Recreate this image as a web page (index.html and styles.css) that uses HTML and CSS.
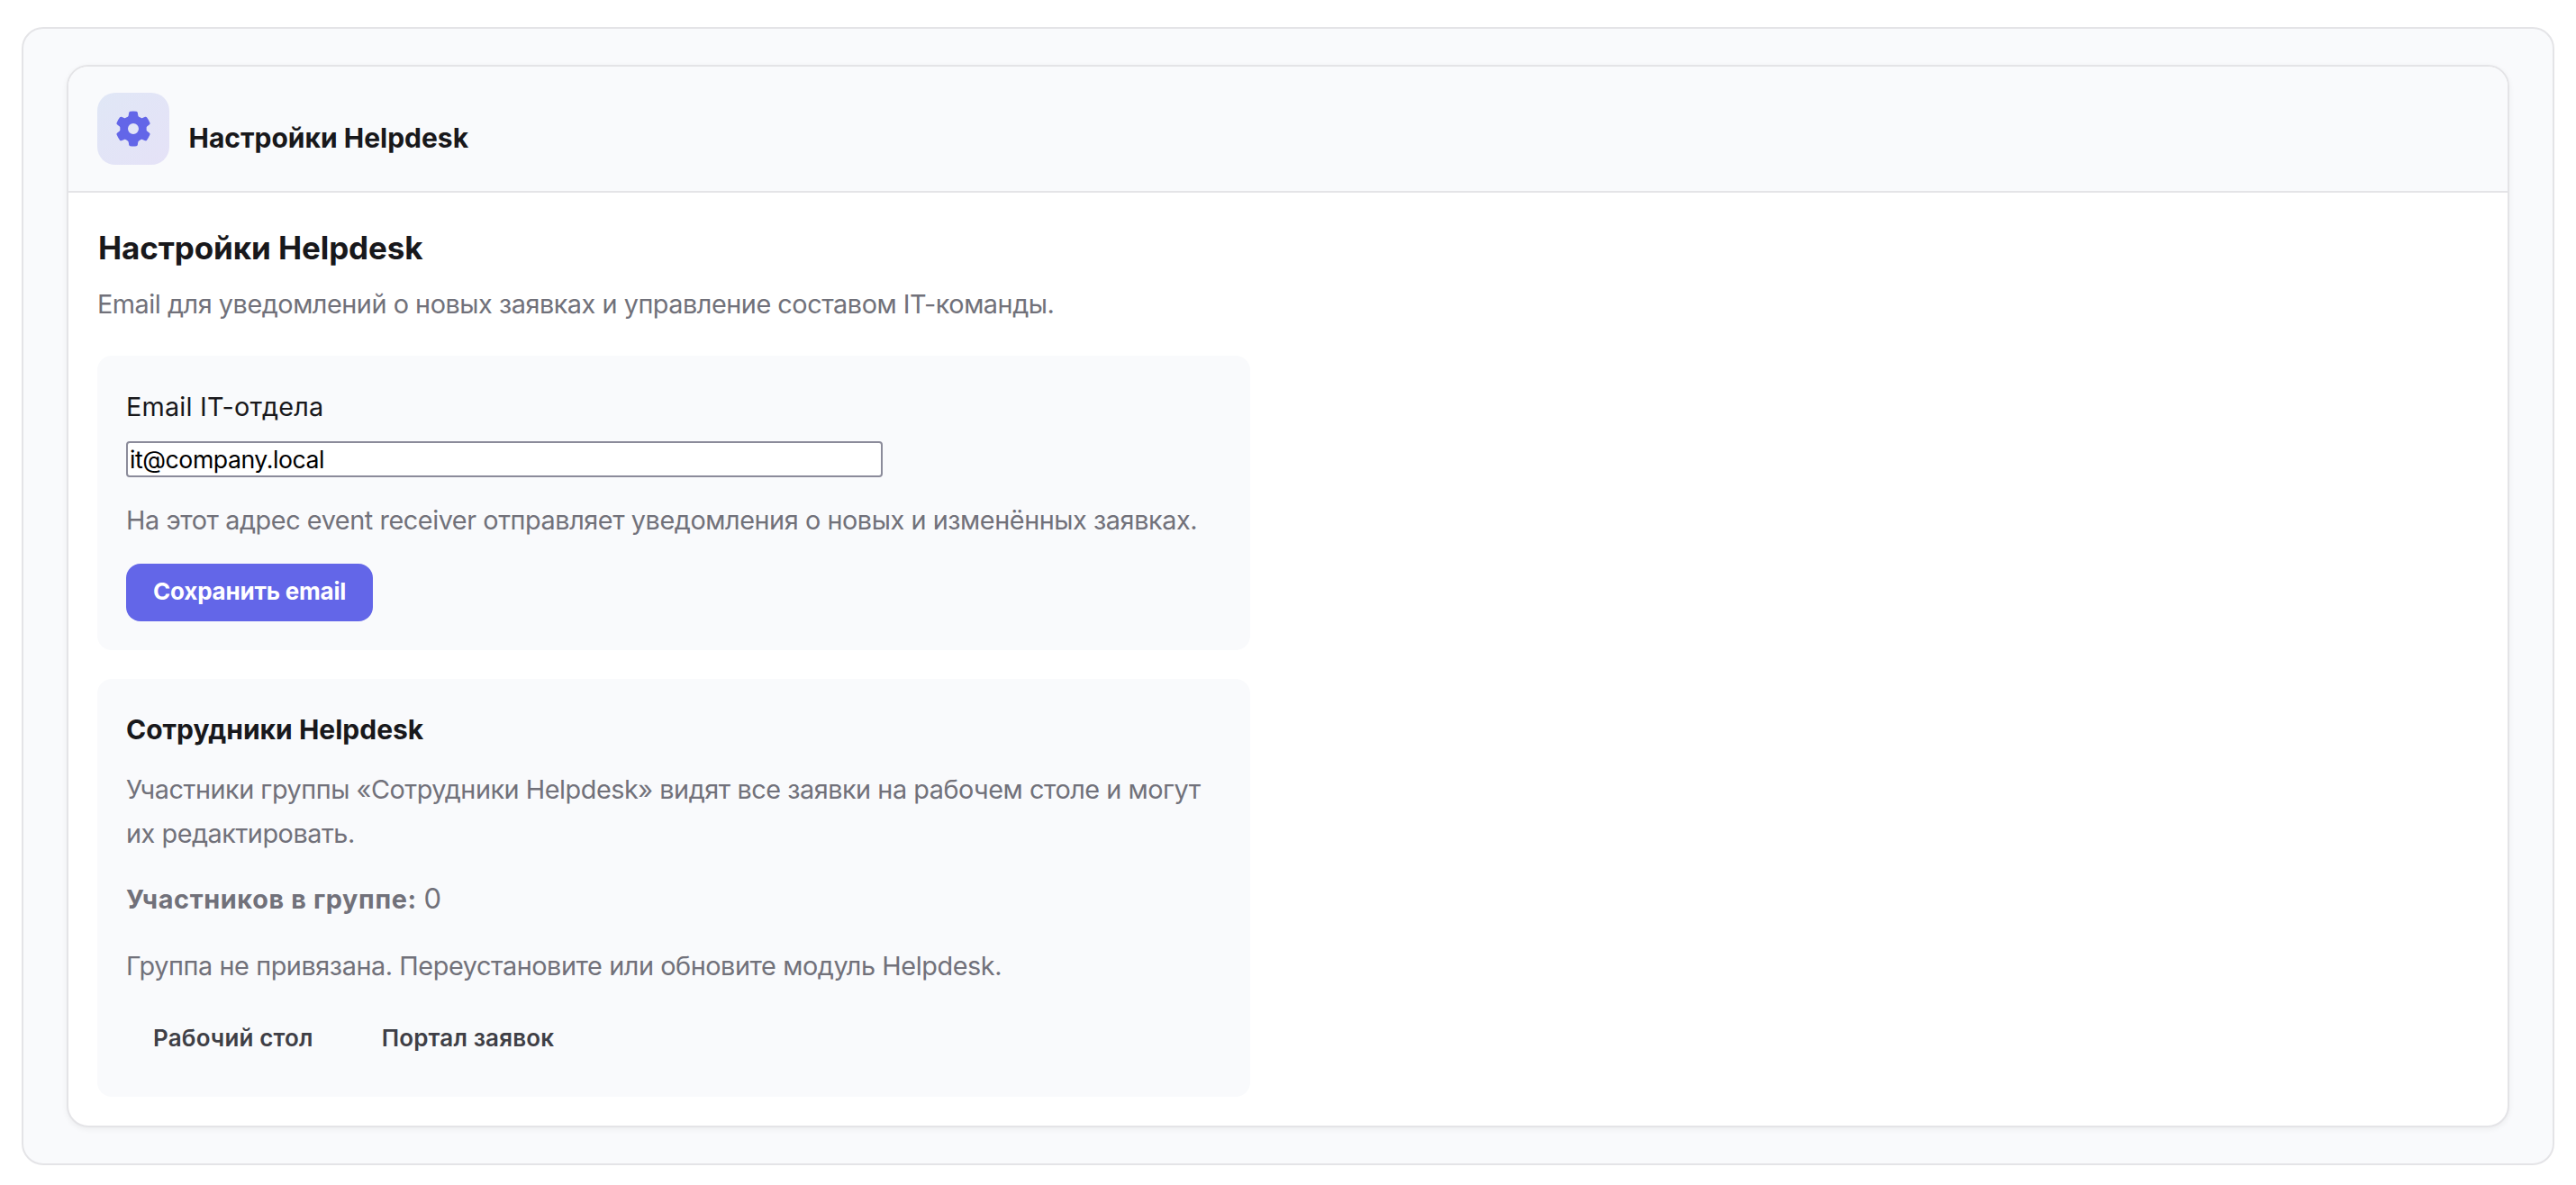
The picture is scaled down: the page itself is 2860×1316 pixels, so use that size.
FILE: index.html
```html
<!DOCTYPE html>
<html lang="ru">
<head>
    <meta charset="UTF-8">
    <meta name="viewport" content="width=device-width, initial-scale=1.0">
    <title>Настройки Helpdesk</title>
    <link rel="stylesheet" href="styles.css">
</head>
<body>
    <main class="page">
        <section class="panel">
            <header class="panel-header">
                <div class="panel-icon">
                    <svg viewBox="-12 -12 24 24" aria-hidden="true">
                        <defs>
                            <path id="tooth" d="M-3.65-6.32C-3.05-6.68-2.75-6.8-2.66-7.4L-2.4-9Q-2.3-9.55-1.75-9.65Q0-9.85 1.75-9.65Q2.3-9.55 2.4-9L2.66-7.4C2.75-6.8 3.05-6.68 3.65-6.32L2.3-4H-2.3Z"/>
                        </defs>
                        <circle class="gear-ring" r="5.05"/>
                        <use href="#tooth"/>
                        <use href="#tooth" transform="rotate(60)"/>
                        <use href="#tooth" transform="rotate(120)"/>
                        <use href="#tooth" transform="rotate(180)"/>
                        <use href="#tooth" transform="rotate(240)"/>
                        <use href="#tooth" transform="rotate(300)"/>
                    </svg>
                </div>
                <h1 class="panel-title">Настройки Helpdesk</h1>
            </header>
            <div class="panel-body">
                <h2 class="section-title">Настройки Helpdesk</h2>
                <p class="text">Email для уведомлений о новых заявках и управление составом IT-команды.</p>

                <div class="card">
                    <label class="label" for="email">Email IT-отдела</label>
                    <input class="input" id="email" type="email" value="it@company.local">
                    <p class="text hint">На этот адрес event receiver отправляет уведомления о новых и изменённых заявках.</p>
                    <button class="btn btn-primary" type="button">Сохранить email</button>
                </div>

                <div class="card card-team">
                    <h3 class="card-title">Сотрудники Helpdesk</h3>
                    <p class="text">Участники группы «Сотрудники Helpdesk» видят все заявки на рабочем столе и могут их редактировать.</p>
                    <p class="text members"><strong>Участников в группе:</strong> <span class="count">0</span></p>
                    <p class="text status">Группа не привязана. Переустановите или обновите модуль Helpdesk.</p>
                    <div class="actions">
                        <a class="btn btn-ghost" href="#">Рабочий стол</a>
                        <a class="btn btn-ghost" href="#">Портал заявок</a>
                    </div>
                </div>
            </div>
        </section>
    </main>
</body>
</html>
```
FILE: styles.css
```css
* {
    box-sizing: border-box;
}
body {
    margin: 0;
    padding: 30px 24px 22px;
    background-color: #fff;
    color: #18181b;
    font-family: Inter, sans-serif;
    font-size: 28.8px;
    line-height: 1.7;
}
h1, h2, h3, p {
    margin: 0;
}
.page {
    padding: 40px 48px;
    background-color: #f9fafc;
    border: 2px solid #e4e4e7;
    border-radius: 24px;
}
.panel {
    overflow: hidden;
    background-color: #fff;
    border: 2px solid #e4e4e7;
    border-radius: 24px;
    box-shadow: 0 2px 6px rgba(0, 0, 0, 0.06);
}
.panel-header {
    display: flex;
    align-items: center;
    gap: 21.5px;
    height: 140px;
    padding: 0 32px;
    background-color: #f9fafc;
    border-bottom: 2px solid #e4e4e7;
}
.panel-icon {
    display: flex;
    align-items: center;
    justify-content: center;
    width: 80px;
    height: 80px;
    background: linear-gradient(135deg, #e0e7f6, #e5e2f7);
    border-radius: 20px;
    color: #6366e8;
}
.panel-icon svg {
    width: 48px;
    height: 48px;
    fill: currentColor;
}
.gear-ring {
    fill: none;
    stroke: currentColor;
    stroke-width: 4.1;
}
.panel-title {
    padding-top: 20px;
    font-size: 30px;
    font-weight: 700;
}
.panel-body {
    padding: 32px;
}
.section-title {
    margin-bottom: 10px;
    padding-left: 1px;
    font-size: 35px;
    font-weight: 700;
    line-height: 58px;
    letter-spacing: -0.1px;
}
.text {
    color: #71717a;
    letter-spacing: -0.46px;
}
.card {
    max-width: 1280px;
    margin-top: 32px;
    padding: 32px;
    background-color: #f9fafc;
    border-radius: 16px;
}
.card-team {
    padding-bottom: 33px;
}
.card-title {
    margin-bottom: 19px;
    font-size: 30px;
    font-weight: 700;
    line-height: 48px;
}
.label {
    display: block;
    padding-top: 1px;
    margin-bottom: 13px;
    letter-spacing: 0.2px;
}
.input {
    display: block;
    width: 840px;
    height: 40px;
    padding: 2px;
    border: 2px solid #8b8b9a;
    border-radius: 4px;
    background-color: #fff;
    color: #000;
    font-family: inherit;
    font-size: 26.66px;
    letter-spacing: -0.45px;
}
.hint {
    margin: 24px 0 23px;
    letter-spacing: -0.43px;
}
.members {
    margin-top: 24px;
}
.members strong {
    letter-spacing: 0.65px;
}
.count {
    font-size: 31px;
    line-height: 1;
}
.status {
    margin-top: 25px;
    letter-spacing: -0.42px;
}
.btn {
    display: block;
    padding: 0 30px;
    border: none;
    border-radius: 16px;
    font-family: inherit;
    font-size: 26px;
    font-weight: 600;
    line-height: 64px;
    text-decoration: none;
}
.btn-primary {
    padding-bottom: 2px;
    background-color: #6366e8;
    color: #fff;
    font-weight: 700;
    line-height: 62px;
    letter-spacing: -0.2px;
}
.btn-ghost {
    color: #3f3f46;
    letter-spacing: 0.15px;
}
.actions {
    display: flex;
    gap: 16px;
    margin-top: 23px;
}
```
